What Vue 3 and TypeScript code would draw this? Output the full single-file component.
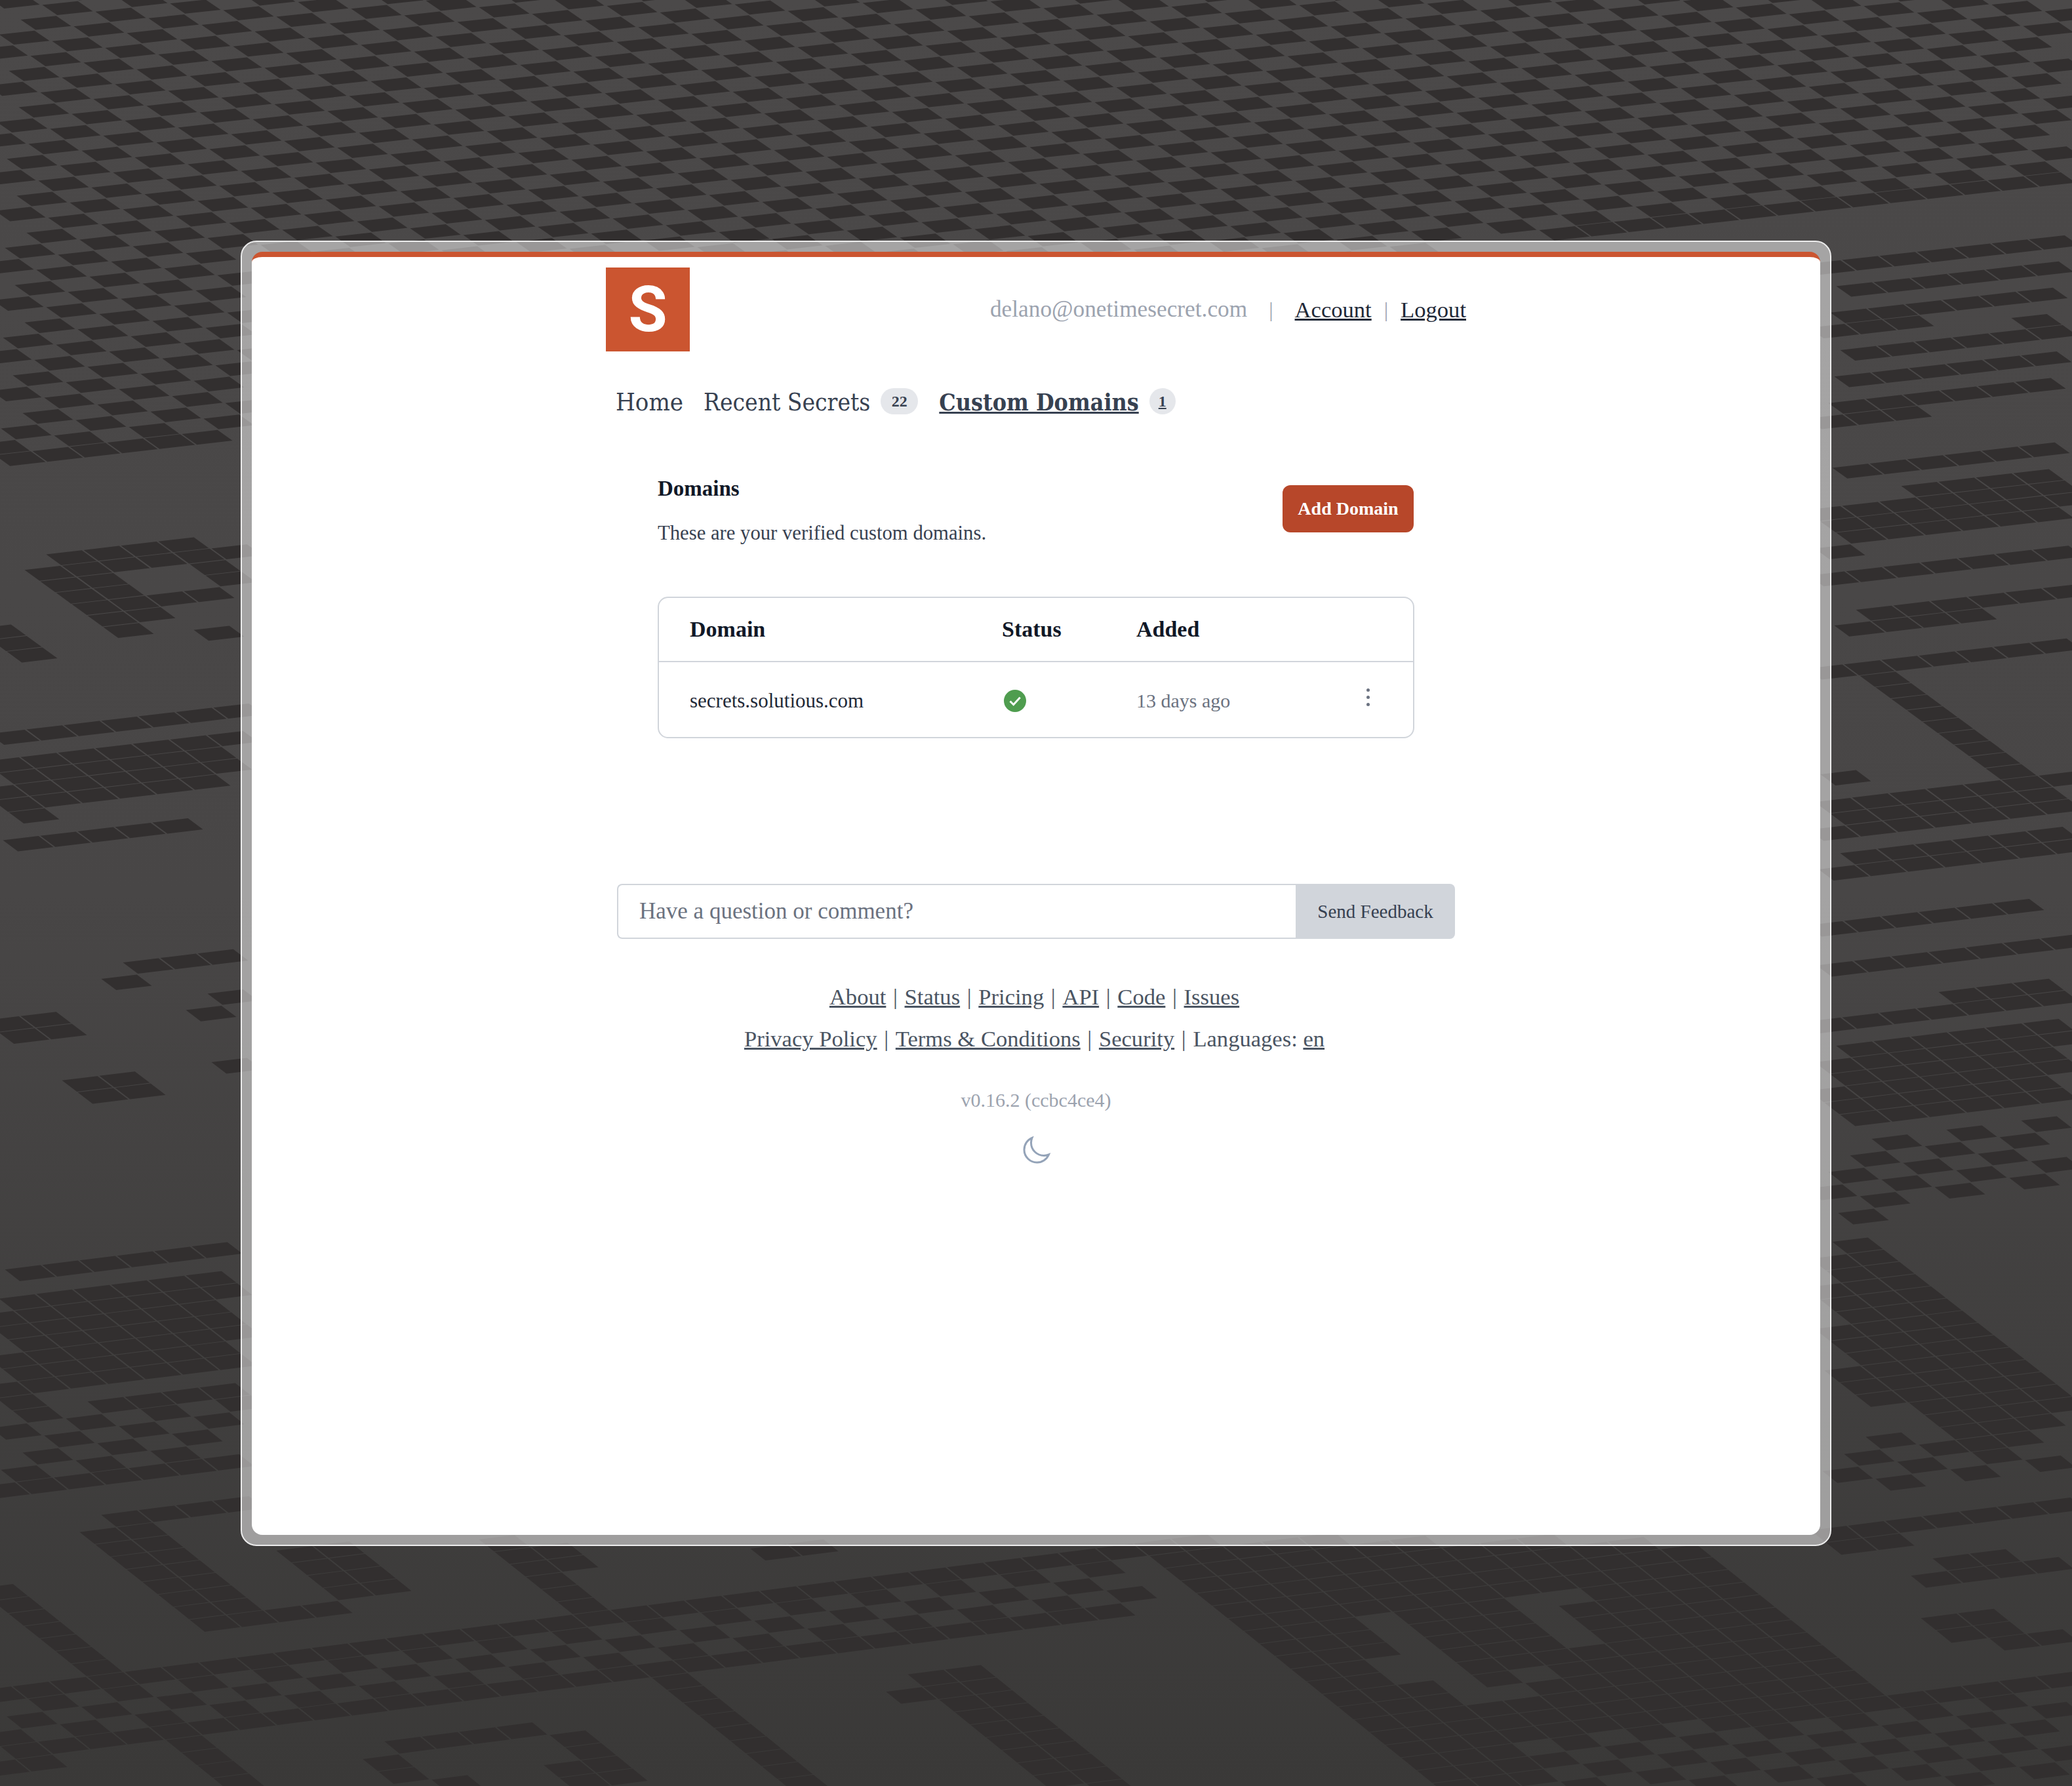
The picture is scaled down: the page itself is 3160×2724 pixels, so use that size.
<template>
  <div class="page">
    <svg class="pattern" width="3160" height="2724" viewBox="0 0 3160 2724" aria-hidden="true">
      <path :d="tilePath" fill="#322f2f" />
    </svg>

    <div class="frame">
      <main class="panel">
        <div class="container">
          <header class="masthead">
            <a class="logo" href="#">S</a>
            <div class="user">
              <span class="user__email">delano@onetimesecret.com</span>
              <span class="user__sep user__sep--wide">|</span>
              <a href="#">Account</a>
              <span class="user__sep">|</span>
              <a href="#">Logout</a>
            </div>
          </header>

          <nav class="tabs">
            <a href="#" class="tabs__home">Home</a>
            <a href="#" class="tabs__recent">Recent Secrets</a>
            <span class="badge">22</span>
            <a href="#" class="tabs__active">Custom Domains</a>
            <span class="badge badge--one">1</span>
          </nav>

          <section class="domains">
            <div class="domains__head">
              <div class="domains__intro">
                <h2>Domains</h2>
                <p>These are your verified custom domains.</p>
              </div>
              <button type="button" class="add-btn">Add Domain</button>
            </div>

            <div class="table">
              <div class="table__row table__row--head">
                <span>Domain</span>
                <span>Status</span>
                <span>Added</span>
              </div>
              <div class="table__row table__row--body" v-for="row in domains" :key="row.name">
                <span class="table__name">{{ row.name }}</span>
                <span class="table__status">
                  <svg width="36" height="36" viewBox="0 0 36 36">
                    <circle cx="18" cy="18" r="17" fill="#4f9d4f" />
                    <path d="M10.5 18.5l5.2 5.2 10-11" fill="none" stroke="#fff" stroke-width="3" />
                  </svg>
                </span>
                <span class="table__added">{{ row.added }}</span>
                <span class="table__menu">
                  <i></i><i></i><i></i>
                </span>
              </div>
            </div>
          </section>

          <form class="feedback" @submit.prevent>
            <input type="text" placeholder="Have a question or comment?" />
            <button type="submit">Send Feedback</button>
          </form>

          <footer class="foot">
            <p v-for="(line, idx) in footerLines" :key="idx">
              <template v-for="(item, i) in line" :key="item.label">
                <span v-if="i > 0 && !line[i - 1].plain" class="foot__sep"> | </span>
                <span v-if="item.plain">{{ item.label }}&nbsp;</span>
                <a v-else href="#">{{ item.label }}</a>
              </template>
            </p>
            <div class="foot__version">v0.16.2 (ccbc4ce4)</div>
            <svg class="foot__moon" width="48" height="48" viewBox="0 0 24 24" fill="none" stroke="#94a3b8" stroke-width="1.5">
              <path d="M21.752 15.002A9.718 9.718 0 0118 15.75c-5.385 0-9.75-4.365-9.75-9.75 0-1.33.266-2.597.748-3.752A9.753 9.753 0 003 11.25C3 16.635 7.365 21 12.75 21a9.753 9.753 0 009.002-5.998z" />
            </svg>
          </footer>
        </div>
      </main>
    </div>
  </div>
</template>

<script setup lang="ts">
type Pt = [number, number]
type Mode = 'solid' | 'check' | 'none'
interface Region {
  mode: Mode
  pts: Pt[]
}

const domains = [{ name: 'secrets.solutious.com', added: '13 days ago' }]

const footerLines: { label: string; plain?: boolean }[][] = [
  [{ label: 'About' }, { label: 'Status' }, { label: 'Pricing' }, { label: 'API' }, { label: 'Code' }, { label: 'Issues' }],
  [{ label: 'Privacy Policy' }, { label: 'Terms & Conditions' }, { label: 'Security' }, { label: 'Languages:', plain: true }, { label: 'en' }],
]

// background tiles: a skewed grid, regions are traced in screen space from the crops
const mapTop = (x: number, y: number): Pt => [x / 0.496, y / 3]
const mapLeftA = (x: number, y: number): Pt => [x / 3, 370 + y / 1.568]
const mapLeftB = (x: number, y: number): Pt => [x / 3, 1370 + y / 1.568]
const mapRight = (x: number, y: number): Pt => [2790 + x / 3, 370 + y / 0.784]
const mapBottom = (x: number, y: number): Pt => [x / 0.496, 2350 + y / 3]
const mapCorner = (x: number, y: number): Pt => [x / 1.742, 2200 + y / 3]

type Mapper = (x: number, y: number) => Pt

function poly(map: Mapper, mode: Mode, ...c: number[]): Region {
  const pts: Pt[] = []
  for (let i = 0; i < c.length; i += 2) pts.push(map(c[i], c[i + 1]))
  return { mode, pts }
}

// a band across the right strip, given by its top and bottom at the left edge
const bandRight = (t: number, b: number, mode: Mode = 'solid') =>
  poly(mapRight, mode, 0, t, 1110, t - 38, 1110, b - 38, 0, b)

const regions: Region[] = [
  // top checker and its solid edge
  poly(mapLeftA, 'solid', 0, 520, 1110, 445, 1110, 478, 0, 552),
  poly(mapTop, 'solid', 1568, 770, 1180, 1060, 1180, 1100, 1568, 832),
  {
    mode: 'check',
    pts: [[0, -40], [3160, -40], [3160, 258], [2380, 350], [370, 650], [0, 700]],
  },

  // left strip
  poly(mapLeftA, 'solid', 250, 740, 960, 695, 985, 745, 270, 790),
  poly(mapLeftA, 'solid', 190, 780, 440, 770, 850, 960, 520, 950),
  poly(mapLeftA, 'solid', 690, 830, 990, 810, 990, 845, 690, 860),
  poly(mapLeftA, 'solid', 900, 925, 1110, 905, 1110, 945, 900, 955),
  poly(mapLeftA, 'solid', 850, 745, 1110, 720, 1110, 840, 990, 830),
  poly(mapLeftA, 'solid', 0, 920, 210, 1005, 0, 1025),
  poly(mapLeftA, 'solid', 0, 1175, 1110, 1090, 1110, 1120, 0, 1200),
  poly(mapLeftA, 'solid', 0, 1235, 1110, 1150, 1110, 1300, 0, 1385),
  poly(mapLeftA, 'solid', 0, 1425, 1110, 1345, 1110, 1375, 0, 1455),
  poly(mapLeftB, 'solid', 530, 170, 1110, 130, 1110, 165, 530, 205),
  poly(mapLeftB, 'solid', 1010, 205, 1110, 200, 1110, 240, 1020, 235),
  poly(mapLeftB, 'solid', 910, 250, 1110, 240, 1110, 275, 950, 285),
  poly(mapLeftB, 'solid', 1025, 385, 1110, 380, 1110, 420, 1060, 420),
  poly(mapLeftB, 'solid', 0, 285, 300, 265, 440, 320, 100, 350, 0, 310),
  poly(mapLeftB, 'solid', 335, 445, 660, 415, 795, 472, 470, 502),
  poly(mapLeftB, 'solid', 0, 905, 1110, 820, 1110, 850, 0, 935),
  poly(mapLeftB, 'solid', 0, 965, 1110, 890, 1110, 1115, 0, 1180),
  poly(mapLeftB, 'solid', 0, 1210, 1110, 1145, 1110, 1175, 0, 1245),
  poly(mapLeftB, 'check', 0, 1245, 1110, 1175, 1110, 1320, 0, 1385),
  poly(mapLeftB, 'solid', 0, 1385, 1110, 1320, 1110, 1350, 0, 1425),

  // bottom left corner
  poly(mapCorner, 'solid', 225, 420, 290, 325, 640, 240, 640, 305, 445, 370, 715, 775, 935, 730, 750, 480, 990, 470, 1110, 675, 660, 860, 515, 820),
  poly(mapCorner, 'solid', 0, 600, 50, 655, 335, 1070, 240, 1100, 0, 750),

  // right strip
  bandRight(21, 39),
  bandRight(56, 74),
  bandRight(91, 109),
  bandRight(126, 144),
  bandRight(163, 181),
  bandRight(199, 217),
  bandRight(271, 289),
  bandRight(310, 372),
  bandRight(396, 414),
  bandRight(451, 469),
  bandRight(506, 524),
  poly(mapRight, 'solid', 120, 505, 330, 505, 1110, 665, 960, 680),
  poly(mapRight, 'solid', 0, 628, 140, 628, 140, 652, 0, 652),
  bandRight(672, 720),
  bandRight(730, 772),
  poly(mapRight, 'solid', 0, 808, 1020, 775, 1020, 795, 0, 832),
  bandRight(866, 884),
  bandRight(921, 939),
  bandRight(960, 1062),
  bandRight(1080, 1170, 'check'),
  poly(mapRight, 'solid', 0, 1175, 1110, 1375, 1110, 1415, 700, 1440, 150, 1375, 100, 1365, 0, 1310),
  bandRight(1440, 1510, 'check'),
  bandRight(1531, 1549),

  // bottom strip
  poly(mapBottom, 'none', 1020, 340, 1050, 360, 1125, 700, 1105, 740, 1060, 640),
  poly(mapBottom, 'none', 1150, 230, 1190, 215, 1205, 430, 1165, 520, 1185, 600, 1150, 730, 1130, 720, 1160, 510, 1175, 440),
  poly(mapBottom, 'solid', 0, 690, 866, -10, 866, 55, 0, 755),
  poly(mapBottom, 'solid', 0, 975, 866, 240, 866, 310, 0, 1045),
  poly(mapBottom, 'check', 0, 755, 866, 55, 866, 240, 0, 975),
  poly(mapBottom, 'solid', 870, 0, 1275, 0, 1425, 735, 1120, 900, 1185, 1130, 1100, 1130, 905, 280),
  poly(mapBottom, 'solid', 1100, 900, 1568, 600, 1568, 665, 1100, 965),
  poly(mapBottom, 'check', 1100, 965, 1568, 665, 1568, 1130, 1160, 1130),
  poly(mapBottom, 'solid', 1378, 0, 1440, 0, 1395, 65),
  poly(mapBottom, 'solid', 1455, 100, 1520, 50, 1530, 120, 1470, 170),
  poly(mapBottom, 'solid', 1440, 170, 1568, 60, 1568, 140, 1450, 215),
  poly(mapBottom, 'solid', 1445, 375, 1500, 325, 1520, 450, 1465, 475),
  poly(mapBottom, 'solid', 1510, 480, 1568, 400, 1568, 470, 1525, 515),
  poly(mapBottom, 'solid', 375, 0, 415, 0, 470, 300, 430, 330),
  poly(mapBottom, 'solid', 490, 640, 525, 600, 630, 1130, 590, 1130),
  poly(mapBottom, 'solid', 575, 0, 635, 0, 600, 60, 585, 55),
  poly(mapBottom, 'solid', 695, 600, 745, 555, 850, 1070, 850, 1130, 795, 1130, 725, 730, 690, 735, 680, 680, 710, 650),
  poly(mapBottom, 'solid', 295, 945, 405, 850, 420, 885, 305, 990),
  poly(mapBottom, 'solid', 415, 920, 450, 885, 495, 1130, 430, 1130),
  poly(mapBottom, 'solid', 280, 1020, 320, 990, 350, 1130, 295, 1130),
  poly(mapBottom, 'solid', 130, 930, 160, 920, 195, 1130, 165, 1130),
]

function inside(p: Pt, pts: Pt[]) {
  let hit = false
  for (let i = 0, j = pts.length - 1; i < pts.length; j = i++) {
    const [xi, yi] = pts[i]
    const [xj, yj] = pts[j]
    if (yi > p[1] !== yj > p[1] && p[0] < ((xj - xi) * (p[1] - yi)) / (yj - yi) + xi) hit = !hit
  }
  return hit
}

// grid to screen, with a small vertical squeeze towards the top
function project(u: number, v: number): Pt {
  const y = -103 - 7 * u + 18.5 * v
  return [103 + 57 * u + 24 * v, y + 3.04e-5 * (y - 1845) ** 2]
}

function buildTiles() {
  let d = ''
  for (let u = -70; u < 70; u++) {
    for (let v = -30; v < 190; v++) {
      const center = project(u, v)
      if (center[0] < -60 || center[0] > 3220 || center[1] < -40 || center[1] > 2764) continue
      if (center[0] > 400 && center[0] < 2760 && center[1] > 400 && center[1] < 2330) continue
      const region = regions.find(r => inside(center, r.pts))
      if (!region || region.mode === 'none') continue
      if (region.mode === 'check' && (((u + v) % 2) + 2) % 2 !== 0) continue
      const gap = 0.025
      const corners = [
        project(u - 0.5 + gap, v - 0.5 + gap),
        project(u + 0.5 - gap, v - 0.5 + gap),
        project(u + 0.5 - gap, v + 0.5 - gap),
        project(u - 0.5 + gap, v + 0.5 - gap),
      ]
      d += 'M' + corners.map(c => `${c[0].toFixed(1)} ${c[1].toFixed(1)}`).join('L') + 'Z'
    }
  }
  return d
}

const tilePath = buildTiles()
</script>

<style scoped>
.page {
  position: relative;
  width: 3160px;
  height: 2724px;
  padding: 367px 367px 0;
  box-sizing: border-box;
  overflow: hidden;
  background: linear-gradient(180deg, #4b4949 0%, #484646 50%, #3a3938 100%);
  font-family: 'Liberation Serif', serif;
}

.pattern {
  position: absolute;
  inset: 0;
}

.frame {
  position: relative;
  height: 1991px;
  box-sizing: border-box;
  padding: 15px;
  border: 2px solid #ececec;
  border-radius: 24px;
  background: rgba(255, 255, 255, 0.5);
}

.panel {
  height: 100%;
  box-sizing: border-box;
  border-top: 8px solid #cb5530;
  border-radius: 16px;
  background: #fff;
}

.container {
  width: 1344px;
  margin: 0 auto;
  padding: 16px 16px 0;
  box-sizing: border-box;
}

.masthead {
  display: flex;
  align-items: center;
  justify-content: space-between;
}

.logo {
  width: 128px;
  height: 128px;
  display: flex;
  align-items: center;
  justify-content: center;
  background: #cb5530;
  color: #fff;
  font-family: Roboto, 'Liberation Sans', sans-serif;
  font-size: 96px;
  font-weight: 700;
  text-decoration: none;
}

.user {
  display: flex;
  align-items: center;
  font-size: 34.6px;
  line-height: 38px;
  color: #1f2937;
}

.user a {
  color: #1f2937;
}

.user__email {
  font-size: 35.3px;
  color: #9ca3af;
}

.user__sep {
  margin: 0 19px;
  color: #9ca3af;
  font-size: 32px;
}

.user__sep--wide {
  margin: 0 33px;
}

.tabs {
  display: flex;
  align-items: center;
  height: 40px;
  margin-top: 56px;
  padding-left: 15px;
  font-family: 'DejaVu Serif Condensed', 'DejaVu Serif', serif;
  font-size: 36.8px;
  color: #374151;
}

.tabs a {
  padding-top: 2px;
  color: #374151;
  text-decoration: none;
}

.tabs a.tabs__home {
  font-size: 38px;
}

.tabs__recent {
  margin-left: 31px;
}

.tabs a.tabs__active {
  margin-left: 32px;
  font-size: 35.5px;
  font-weight: 700;
  text-decoration: underline;
}

.badge {
  width: 57px;
  height: 40px;
  margin-left: 16px;
  display: flex;
  align-items: center;
  justify-content: center;
  border-radius: 20px;
  background: #e5e7eb;
  font-family: 'Liberation Serif', serif;
  font-size: 24px;
  font-weight: 700;
}

.badge--one {
  width: 40px;
  text-decoration: underline;
}

.domains {
  width: 1154px;
  margin: 91px 0 0 79px;
}

.domains__head {
  display: flex;
  justify-content: space-between;
  align-items: flex-start;
}

.domains__intro {
  padding-top: 2px;
}

.domains__head h2 {
  margin: 0;
  font-size: 33px;
  line-height: 40px;
  font-weight: 700;
  color: #111827;
}

.domains__head p {
  margin: 28px 0 0;
  font-size: 30.7px;
  line-height: 40px;
  color: #374151;
}

.add-btn {
  width: 200px;
  height: 72px;
  margin: 17px 1px 0 0;
  border: none;
  border-radius: 12px;
  background: #b7472a;
  color: #fff;
  font-family: inherit;
  font-size: 28px;
  font-weight: 700;
}

.table {
  margin-top: 77px;
  border: 2px solid #d1d5db;
  border-radius: 16px;
}

.table__row {
  display: grid;
  grid-template-columns: 476px 205px 1fr 40px;
  align-items: center;
  height: 114px;
  padding: 0 47px;
  box-sizing: border-box;
  font-size: 31px;
  color: #111827;
}

.table__row--body {
  padding-top: 3px;
}

.table__row--head {
  height: 98px;
  border-bottom: 2px solid #d1d5db;
  font-size: 34px;
  font-weight: 700;
}

.table__name {
  color: #1f2937;
}

.table__status {
  display: flex;
  padding-left: 2px;
}

.table__added {
  font-size: 30px;
  color: #6b7280;
}

.table__menu {
  display: flex;
  flex-direction: column;
  align-items: center;
  gap: 6px;
  margin: -11px 0 0 -4px;
}

.table__menu i {
  width: 5px;
  height: 5px;
  border-radius: 50%;
  background: #6b7280;
}

.feedback {
  display: flex;
  height: 84px;
  margin: 222px 0 0 17px;
  width: 1278px;
}

.feedback input {
  flex: 1;
  min-width: 0;
  padding: 0 32px;
  box-sizing: border-box;
  border: 2px solid #d1d5db;
  border-right: none;
  border-radius: 8px 0 0 8px;
  outline: none;
  font-family: inherit;
  font-size: 35px;
}

.feedback input::placeholder {
  color: #6b7280;
  opacity: 1;
}

.feedback button {
  width: 243px;
  border: none;
  border-radius: 0 8px 8px 0;
  background: #d1d5db;
  color: #374151;
  font-family: inherit;
  font-size: 29px;
}

.foot {
  margin-top: 56px;
  text-align: center;
  font-size: 34.6px;
  line-height: 64px;
  color: #4b5563;
}

.foot p {
  margin: 0;
  padding-right: 5px;
}

.foot a {
  color: #4b5563;
}

.foot__sep {
  margin: 0 2px;
  white-space: pre;
}

.foot__version {
  margin-top: 42px;
  font-size: 30px;
  line-height: 40px;
  color: #9ca3af;
}

.foot__moon {
  display: block;
  margin: 33px auto 0;
}
</style>

<style>
body {
  margin: 0;
}
</style>
